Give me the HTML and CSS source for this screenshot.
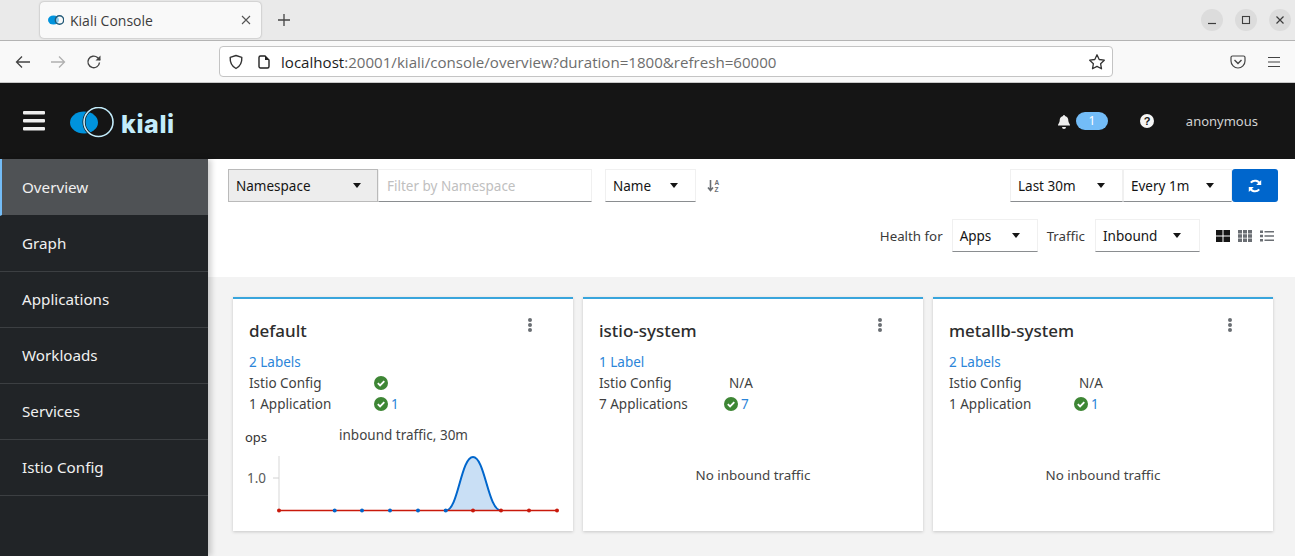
FILE: index.html
```html
<!DOCTYPE html>
<html lang="en">
<head>
<meta charset="utf-8">
<title>Kiali Console</title>
<link rel="stylesheet" href="styles.css">
</head>
<body>
<header class="browser">
  <div class="tabbar">
    <div class="tab">
      <svg class="fav" width="16" height="12" viewBox="0 0 16 12"><ellipse cx="5.500" cy="6" rx="5.500" ry="4.500" fill="#0093dd"/><circle cx="11.500" cy="6" r="4.200" fill="#f9f9f9" fill-opacity=".55" stroke="#235a78" stroke-width="1.400"/></svg>
      <span class="tab-title">Kiali Console</span>
      <svg class="tab-close" width="10" height="10" viewBox="0 0 10 10"><path d="M1 1l8 8M9 1l-8 8" stroke="#555" stroke-width="1.100"/></svg>
    </div>
    <svg class="newtab" width="14" height="14" viewBox="0 0 14 14"><path d="M7 1v12M1 7h12" stroke="#444" stroke-width="1.300"/></svg>
    <div class="winbtns">
      <span class="winbtn"><svg width="10" height="10" viewBox="0 0 10 10"><path d="M1 8.500h8" stroke="#3d3d3d" stroke-width="1.200"/></svg></span>
      <span class="winbtn"><svg width="10" height="10" viewBox="0 0 10 10"><rect x="1.500" y="1.500" width="7" height="7" fill="none" stroke="#3d3d3d" stroke-width="1.100"/></svg></span>
      <span class="winbtn"><svg width="10" height="10" viewBox="0 0 10 10"><path d="M1.500 1.500l7 7M8.500 1.500l-7 7" stroke="#3d3d3d" stroke-width="1.200"/></svg></span>
    </div>
  </div>
  <div class="navbar">
    <svg class="nav-back" width="16" height="14" viewBox="0 0 16 14"><path d="M15 7H2M7 1.500L1.500 7 7 12.500" fill="none" stroke="#444" stroke-width="1.300"/></svg>
    <svg class="nav-fwd" width="16" height="14" viewBox="0 0 16 14"><path d="M1 7h13M9 1.500L14.500 7 9 12.500" fill="none" stroke="#b0b0b0" stroke-width="1.300"/></svg>
    <svg class="nav-reload" width="16" height="16" viewBox="0 0 16 16"><path d="M13.500 8.500A5.800 5.800 0 1 1 11.500 3.500L14 6" fill="none" stroke="#444" stroke-width="1.400"/><path d="M14.500 1.500v5h-5z" fill="#444"/></svg>
    <div class="urlbar">
      <svg class="shield" width="16" height="16" viewBox="0 0 16 16"><path d="M8 1.500l5.800 1.800c.3 5-1.500 9-5.800 11.200C3.700 12.300 1.900 8.300 2.200 3.300z" fill="none" stroke="#333" stroke-width="1.400" stroke-linejoin="round"/></svg>
      <svg class="page" width="12" height="14" viewBox="0 0 12 14"><path d="M1 2.500A1.500 1.500 0 0 1 2.500 1H7l4 4v6.500a1.500 1.500 0 0 1-1.500 1.500h-7A1.500 1.500 0 0 1 1 11.500z" fill="none" stroke="#222" stroke-width="1.400"/><path d="M7 1v4h4" fill="#222"/></svg>
      <span class="url"><span class="host">localhost</span>:20001/kiali/console/overview?duration=1800&amp;refresh=60000</span>
      <svg class="star" width="18" height="18" viewBox="0 0 18 18"><path d="M9 1.800l2.200 4.700 5.100.7-3.700 3.500.9 5.100L9 13.400l-4.500 2.400.9-5.100L1.700 7.200l5.100-.7z" fill="none" stroke="#333" stroke-width="1.300" stroke-linejoin="round"/></svg>
    </div>
    <svg class="pocket" width="16" height="14" viewBox="0 0 16 14"><path d="M2.500 1h11A1.500 1.500 0 0 1 15 2.500V6a7 7 0 0 1-14 0V2.500A1.500 1.500 0 0 1 2.500 1z" fill="none" stroke="#444" stroke-width="1.200"/><path d="M4.500 5L8 8.500 11.500 5" fill="none" stroke="#444" stroke-width="1.400"/></svg>
    <svg class="menu" width="14" height="12" viewBox="0 0 14 12"><path d="M1 1.500h12M1 6h12M1 10.500h12" stroke="#444" stroke-width="1.200"/></svg>
  </div>
</header>

<div class="masthead">
  <svg class="burger" width="22" height="20" viewBox="0 0 22 20"><rect y="0" width="22" height="3.500" rx="1" fill="#eee"/><rect y="8" width="22" height="3.500" rx="1" fill="#eee"/><rect y="16" width="22" height="3.500" rx="1" fill="#eee"/></svg>
  <svg class="logo-mark" width="45" height="31" viewBox="0 0 45 31"><ellipse cx="14" cy="15.500" rx="14" ry="11" fill="#0093dd"/><circle cx="28.500" cy="15" r="14.500" fill="none" stroke="#151515" stroke-width="3"/><circle cx="28.500" cy="15" r="14.500" fill="none" stroke="#c3ecfb" stroke-width="1.600"/></svg>
  <span class="logo-text">kiali</span>
  <div class="mast-right">
    <svg class="bell" width="14" height="15" viewBox="0 0 14 15"><path d="M7 1a1 1 0 0 1 1 1c2.500.5 3.300 2.500 3.300 4.500 0 2.500 1.700 3.500 1.700 4.500v.5H1V11c0-1 1.700-2 1.700-4.500C2.700 4.500 3.500 2.500 6 2a1 1 0 0 1 1-1zM5 13h4a2 2 0 0 1-4 0z" fill="#eee"/></svg>
    <span class="badge">1</span>
    <svg class="help" width="14" height="14" viewBox="0 0 14 14"><circle cx="7" cy="7" r="7" fill="#f5f5f5"/><text x="7" y="10.800" class="help-q" text-anchor="middle">?</text></svg>
    <span class="user">anonymous</span>
  </div>
</div>

<div class="shell">
  <nav class="sidebar">
    <a class="nav-item active">Overview</a>
    <a class="nav-item">Graph</a>
    <a class="nav-item">Applications</a>
    <a class="nav-item">Workloads</a>
    <a class="nav-item">Services</a>
    <a class="nav-item">Istio Config</a>
  </nav>
  <main class="content">
    <section class="toolbar">
      <div class="tool-row">
        <div class="select ns-select"><span>Namespace</span><i class="caret"></i></div>
        <div class="filter-input">Filter by Namespace</div>
        <div class="select name-select"><span>Name</span><i class="caret"></i></div>
        <svg class="sort" width="14" height="14" viewBox="0 0 14 14"><path d="M3.500 1v10M1 8.500l2.500 3 2.500-3" fill="none" stroke="#6a6e73" stroke-width="1.600"/><text x="7.500" y="5.800" class="az">A</text><text x="7.500" y="13" class="az">Z</text></svg>
        <div class="spacer"></div>
        <div class="select time-select"><span>Last 30m</span><i class="caret"></i></div>
        <div class="select every-select"><span>Every 1m</span><i class="caret"></i></div>
        <button class="refresh" type="button"><svg width="14" height="14" viewBox="0 0 14 14"><path d="M12.200 5.500A5.400 5.400 0 0 0 2.800 3.700M1.800 8.500a5.400 5.400 0 0 0 9.400 1.800" fill="none" stroke="#fff" stroke-width="2"/><path d="M13.200 1v5h-5zM.8 13V8h5z" fill="#fff"/></svg></button>
      </div>
      <div class="tool-row second">
        <span class="tool-label">Health for</span>
        <div class="select apps-select"><span>Apps</span><i class="caret"></i></div>
        <span class="tool-label traffic">Traffic</span>
        <div class="select inbound-select"><span>Inbound</span><i class="caret"></i></div>
        <div class="views">
          <svg width="14" height="12" viewBox="0 0 14 12"><path d="M0 0h6.500v5.500H0zM7.500 0H14v5.500H7.500zM0 6.500h6.500V12H0zM7.500 6.500H14V12H7.500z" fill="#151515"/></svg>
          <svg width="14" height="12" viewBox="0 0 14 12"><path d="M0 0h4v3.500H0zM5 0h4v3.500H5zM10 0h4v3.500h-4zM0 4.250h4v3.500H0zM5 4.250h4v3.500H5zM10 4.250h4v3.500h-4zM0 8.500h4V12H0zM5 8.500h4V12H5zM10 8.500h4V12h-4z" fill="#6a6e73"/></svg>
          <svg width="14" height="12" viewBox="0 0 14 12"><path d="M0 .5h3v2.500H0zM4.500 1h9.500v1.500H4.500zM0 4.750h3v2.500H0zM4.500 5.250h9.500v1.500H4.500zM0 9h3v2.500H0zM4.500 9.500h9.500V11H4.500z" fill="#6a6e73"/></svg>
        </div>
      </div>
    </section>
    <section class="cards">
      <article class="card">
        <div class="card-head"><h2>default</h2><i class="kebab"><b></b><b></b><b></b></i></div>
        <a class="link labels">2 Labels</a>
        <div class="stat"><span class="stat-name">Istio Config</span><svg class="ok" width="14" height="14" viewBox="0 0 14 14"><circle cx="7" cy="7" r="7" fill="#3e8635"/><path d="M3.800 7.200l2.300 2.300 4.200-4.300" fill="none" stroke="#fff" stroke-width="1.800"/></svg></div>
        <div class="stat"><span class="stat-name">1 Application</span><svg class="ok" width="14" height="14" viewBox="0 0 14 14"><circle cx="7" cy="7" r="7" fill="#3e8635"/><path d="M3.800 7.200l2.300 2.300 4.200-4.300" fill="none" stroke="#fff" stroke-width="1.800"/></svg><a class="link count">1</a></div>
        <div class="chart">
          <span class="ops">ops</span>
          <span class="chart-title">inbound traffic, 30m</span>
          <svg class="plot" width="316" height="66" viewBox="0 0 316 66">
            <path d="M34 9V63" stroke="#e4e4e4" stroke-width="1.500" fill="none"/>
            <path d="M28 31h6" stroke="#d2d2d2" stroke-width="1" fill="none"/>
            <text x="2" y="36" class="tick">1.0</text>
            <path d="M201 63.500C213 63.500 216 10 228 10S243 63.500 256 63.500z" fill="#c9dff5"/>
            <path d="M201 63.500C213 63.500 216 10 228 10S243 63.500 256 63.500" stroke="#0066cc" stroke-width="2" fill="none"/>
            <path d="M34 63.500H312" stroke="#c9190b" stroke-width="1.400" fill="none"/>
            <g fill="#0066cc"><circle cx="89.700" cy="63.500" r="2"/><circle cx="117" cy="63.500" r="2"/><circle cx="145" cy="63.500" r="2"/><circle cx="173" cy="63.500" r="2"/><circle cx="200.700" cy="63.500" r="2"/></g>
            <g fill="#c9190b"><circle cx="34" cy="63.500" r="2"/><circle cx="228" cy="63.500" r="2"/><circle cx="256" cy="63.500" r="2"/><circle cx="284" cy="63.500" r="2"/><circle cx="312" cy="63.500" r="2"/></g>
          </svg>
        </div>
      </article>
      <article class="card">
        <div class="card-head"><h2>istio-system</h2><i class="kebab"><b></b><b></b><b></b></i></div>
        <a class="link labels">1 Label</a>
        <div class="stat"><span class="stat-name">Istio Config</span><span class="na">N/A</span></div>
        <div class="stat"><span class="stat-name">7 Applications</span><svg class="ok" width="14" height="14" viewBox="0 0 14 14"><circle cx="7" cy="7" r="7" fill="#3e8635"/><path d="M3.800 7.200l2.300 2.300 4.200-4.300" fill="none" stroke="#fff" stroke-width="1.800"/></svg><a class="link count">7</a></div>
        <p class="empty">No inbound traffic</p>
      </article>
      <article class="card">
        <div class="card-head"><h2>metallb-system</h2><i class="kebab"><b></b><b></b><b></b></i></div>
        <a class="link labels">2 Labels</a>
        <div class="stat"><span class="stat-name">Istio Config</span><span class="na">N/A</span></div>
        <div class="stat"><span class="stat-name">1 Application</span><svg class="ok" width="14" height="14" viewBox="0 0 14 14"><circle cx="7" cy="7" r="7" fill="#3e8635"/><path d="M3.800 7.200l2.300 2.300 4.200-4.300" fill="none" stroke="#fff" stroke-width="1.800"/></svg><a class="link count">1</a></div>
        <p class="empty">No inbound traffic</p>
      </article>
    </section>
  </main>
</div>
</body>
</html>
```
FILE: styles.css
```css
* { box-sizing: border-box; }
html, body { margin: 0; padding: 0; height: 556px; overflow: hidden; }
body { font-family: "Noto Sans", "Open Sans", sans-serif; font-size: 14px; color: #151515; background: #f3f3f3; display: flex; flex-direction: column; }

.browser { flex: none; height: 83px; }
.tabbar { height: 41px; background: #eaeaea; border-bottom: 1px solid #b4b4b4; display: flex; align-items: flex-start; padding: 2px 4px 0 40px; }
.tab { width: 221px; height: 36px; background: #f9f9f9; border-radius: 4px; box-shadow: 0 0 2px rgba(0,0,0,.35); display: flex; align-items: center; padding: 0 8px; margin-right: 16px; }
.fav { margin-right: 6px; }
.tab-title { flex: 1; font-size: 14px; color: #3d3d3d; font-family: "Open Sans", sans-serif; }
.tab-close { margin-right: 2px; }
.newtab { margin-top: 11px; }
.winbtns { margin-left: auto; display: flex; gap: 12px; margin-top: 7px; }
.winbtn { width: 22px; height: 22px; border-radius: 50%; background: #dcdcdc; display: flex; align-items: center; justify-content: center; }
.navbar { height: 42px; background: #f9f9f9; border-bottom: 1px solid #c8c8c8; display: flex; align-items: center; padding: 0 14px 0 15px; }
.nav-fwd { margin-left: 19px; }
.nav-reload { margin-left: 20px; }
.urlbar { width: 894px; height: 31px; margin-left: 117px; background: #fff; border: 1px solid #c4c4c4; border-radius: 4px; display: flex; align-items: center; padding: 0 6px 0 8px; }
.page { margin-left: 14px; }
.url { margin-left: 11px; flex: 1; font-size: 15.100px; color: #6d6d6d; font-family: "Open Sans", sans-serif; white-space: nowrap; }
.host { color: #1c1c1c; }
.pocket { margin-left: 117px; }
.menu { margin-left: 21px; }

.masthead { flex: none; height: 76px; background: #151515; display: flex; align-items: center; padding: 0 37px 0 23px; }
.burger { flex: none; }
.logo-mark { margin-left: 25px; margin-top: 3px; }
.logo-text { margin-left: 6px; margin-top: 6px; font-family: "Inter", sans-serif; font-weight: 800; font-size: 25px; letter-spacing: .6px; color: #c3ecfb; line-height: 1; }
.mast-right { margin-left: auto; display: flex; align-items: center; }
.bell { margin-right: 5px; }
.badge { width: 32px; height: 18px; border-radius: 9px; background: #73bcf7; color: #fff; font-size: 12px; line-height: 18px; text-align: center; }
.help { margin-left: 32px; }
.help-q { font: 700 11px "Liberation Sans", sans-serif; fill: #151515; }
.user { margin-left: 32px; color: #d2d2d2; font-size: 13px; }

.shell { flex: 1; min-height: 0; display: flex; }
.sidebar { flex: none; width: 208px; background: #212427; display: flex; flex-direction: column; box-shadow: 3px 0 6px rgba(0,0,0,.2); position: relative; }
.nav-item { height: 56px; display: flex; align-items: center; padding: 0 0 2px 22px; color: #f0f0f0; font-size: 15.200px; border-bottom: 1px solid #3c3f42; }
.nav-item.active { height: 57px; background: #4f5255; background-clip: padding-box; border-left: 2px solid #73bcf7; padding: 0 0 0 20px; border-bottom-color: #212427; }

.content { flex: 1; min-width: 0; display: flex; flex-direction: column; }
.toolbar { flex: none; height: 118px; background: #fff; padding: 10px 17px 0 20px; }
.tool-row { display: flex; align-items: center; height: 33px; }
.tool-row.second { margin-top: 17px; justify-content: flex-end; padding-right: 4px; }
.spacer { flex: 1; }
.select { height: 33px; background: #fff; border: 1px solid #f0f0f0; border-bottom: 1px solid #8a8d90; display: flex; align-items: center; justify-content: space-between; padding: 0 17px 0 7px; font-size: 13.500px; color: #151515; }
.caret { width: 0; height: 0; border-left: 4.500px solid transparent; border-right: 4.500px solid transparent; border-top: 5px solid #151515; }
.ns-select { width: 150px; background: #ededed; border: 1px solid #bababa; padding-right: 16px; }
.filter-input { width: 214px; height: 33px; border: 1px solid #f0f0f0; border-bottom: 1px solid #8a8d90; display: flex; align-items: center; padding: 0 0 0 8px; font-size: 13.500px; color: #c0c0c0; }
.name-select { width: 91px; margin-left: 13px; }
.sort { margin-left: 11px; }
.az { font: 700 6.500px "Liberation Sans", sans-serif; fill: #6a6e73; }
.time-select { width: 113px; }
.every-select { width: 109px; }
.refresh { width: 46px; height: 33px; background: #0066cc; border: 0; border-radius: 3px; display: flex; align-items: center; justify-content: center; padding: 0; }
.tool-label { font-size: 13.300px; color: #3a3a3a; margin-right: 9px; }
.tool-label.traffic { margin-left: 9px; margin-right: 10px; }
.apps-select { width: 86px; }
.inbound-select { width: 105px; padding-right: 18px; }
.views { display: flex; gap: 8px; margin-left: 16px; }

.cards { flex: 1; padding: 20px 22px 0 25px; display: grid; grid-template-columns: repeat(3, 340px); column-gap: 10px; align-items: start; }
.card { height: 234px; background: #fff; border-top: 2px solid #39a5dc; box-shadow: 0 1px 3px rgba(0,0,0,.18); padding: 0 16px; display: flex; flex-direction: column; }
.card-head { height: 53px; display: flex; align-items: flex-start; justify-content: space-between; padding-top: 20px; }
.card-head h2 { margin: 0; font-size: 17px; font-weight: 500; line-height: 24px; color: #2d2d2d; }
.kebab { display: flex; flex-direction: column; gap: 1px; margin: -1px 25px 0 0; }
.kebab b { width: 4px; height: 4px; border-radius: 50%; background: #6a6e73; }
.link { color: #2b85d9; }
.labels { height: 20px; line-height: 20px; font-size: 13.500px; }
.stat { height: 21px; display: flex; align-items: center; font-size: 13.500px; color: #3f3f3f; }
.stat-name { width: 125px; }
.ok { flex: none; }
.count { margin-left: 3px; }
.na { margin-left: 5px; }
.chart { position: relative; height: 104px; margin: 0 -16px; }
.ops { position: absolute; left: 12px; top: 14px; font-size: 13px; color: #333; }
.chart-title { position: absolute; left: 106px; top: 12px; font-size: 13.500px; color: #444; }
.plot { position: absolute; left: 12px; top: 33px; }
.tick { font: 13.500px "Noto Sans", sans-serif; fill: #5a5a5a; }
.empty { margin: 51px 0 0; text-align: center; font-size: 13.400px; color: #444; line-height: 21px; }
```
